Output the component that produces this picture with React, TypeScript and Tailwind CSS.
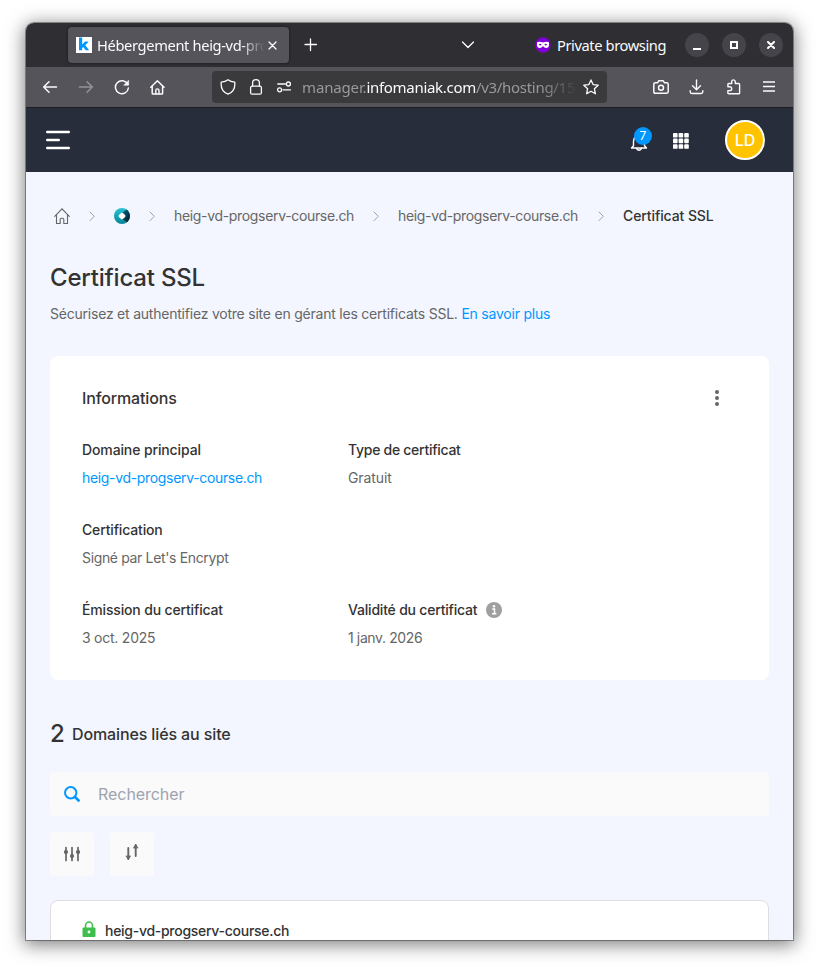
import React from "react";

type IconProps = { children: React.ReactNode; className?: string; size?: number; box?: number };

function Icon({ children, className = "", size = 16, box = 16 }: IconProps) {
  return (
    <svg
      width={size}
      height={size}
      viewBox={`0 0 ${box} ${box}`}
      fill="none"
      stroke="currentColor"
      strokeWidth="1.3"
      strokeLinecap="round"
      strokeLinejoin="round"
      className={`block shrink-0 ${className}`}
    >
      {children}
    </svg>
  );
}

function TabBar() {
  return (
    <div className="flex h-11 items-center bg-[#2f2e33] pr-[10px] pl-[42px]">
      <div className="flex h-9 w-[221px] items-center rounded bg-[#55545a] pl-2 shadow-[0_0_3px_rgba(0,0,0,0.6)]">
        <svg width="16" height="16" viewBox="0 0 16 16" className="block shrink-0">
          <rect width="16" height="16" fill="#fff" />
          <path d="M3 .5h3.200v7L9 4.500h3.700L9.300 8.200l3.800 5.100H9.600L7.300 9.900l-1.100 1.100v2.300H3z" fill="#0098ff" />
        </svg>
        <div className="ml-[5px] w-[168px] overflow-hidden whitespace-nowrap text-[14.67px] leading-9 tracking-[-0.35px] text-[#fbfbfe] [mask-image:linear-gradient(to_right,black_143px,transparent_168px)]">
          Hébergement heig-vd-pro
        </div>
        <Icon size={9} box={9} className="ml-[3px] text-white"><path d="M1 1l7 7M8 1L1 8" /></Icon>
      </div>
      <Icon className="ml-[14px] text-white"><path d="M7.500 2v11.500M2 7.500h11.500" /></Icon>
      <Icon className="ml-[141px] text-white"><path d="M2.500 5L8 10.500 13.500 5" /></Icon>
      <svg width="16" height="16" viewBox="0 0 16 16" className="ml-[59px] block shrink-0">
        <circle cx="8" cy="8" r="7.700" fill="#8000d7" />
        <path d="M2 5.300c2-1.200 4.400-.5 6 .3 1.600-.8 4-1.500 6-.3v2.800c0 3.400-4.200 3.800-6 1-1.800 2.800-6 2.400-6-1z" fill="#fff" />
        <path d="M3.800 7.600c1-1.100 2.300-1 2.800.2-.8.900-2 1-2.800-.2zm8.400 0c-1-1.100-2.300-1-2.800.2.800.9 2 1 2.800-.2z" fill="#8000d7" />
      </svg>
      <div className="ml-[6px] w-[128px] whitespace-nowrap text-[14.67px] leading-5 tracking-[-0.4px] text-[#fbfbfe]">Private browsing</div>
      <div className="flex h-6 w-6 items-center justify-center rounded-full bg-[#45444a]">
        <div className="mt-[7px] h-[2px] w-2 bg-white" />
      </div>
      <div className="ml-[13px] flex h-6 w-6 items-center justify-center rounded-full bg-[#45444a]">
        <div className="h-2 w-2 border-2 border-white" />
      </div>
      <div className="ml-[13px] flex h-6 w-6 items-center justify-center rounded-full bg-[#45444a]">
        <Icon size={8} box={8} className="text-white"><path d="M1 1l6 6M7 1L1 7" strokeWidth="2" /></Icon>
      </div>
    </div>
  );
}

function NavBar() {
  return (
    <div className="flex h-10 items-center bg-[#55545a] pl-4 text-[#fbfbfe]">
      <Icon><path d="M14.500 8H1.700M7 2.700L1.700 8 7 13.300" strokeWidth="1.500" /></Icon>
      <Icon className="ml-5 text-[#949398]"><path d="M1.500 8h12.800M9 2.700L14.300 8 9 13.300" strokeWidth="1.500" /></Icon>
      <Icon className="ml-5">
        <path d="M13.700 5.200A6.500 6.500 0 1 0 14.400 9" strokeWidth="1.500" />
        <path d="M14.600 1.600v4.600H10z" fill="currentColor" strokeWidth=".6" />
      </Icon>
      <Icon className="ml-5">
        <path d="M.8 8.300l6.600-6.500L14 8.300M2.200 7.300v7q0 .8.800.8h8.800q.8 0 .8-.8v-7" strokeWidth="1.500" />
        <path d="M5.800 14.800v-3.300a1.600 1.600 0 0 1 3.200 0v3.300" strokeWidth="1.400" />
      </Icon>
      <div className="ml-[46px] flex h-8 w-[395px] items-center rounded bg-[#3a393b] pl-2">
        <Icon><path d="M8 .8C6 2.400 3.500 3 1.200 3.200c-.5 5.200 1.500 9.800 6.800 12 5.300-2.200 7.300-6.800 6.800-12C12.500 3 10 2.400 8 .8z" strokeWidth="1.300" /></Icon>
        <Icon className="ml-3">
          <rect x="2.600" y="7.200" width="10.800" height="8" rx="1.500" strokeWidth="1.300" />
          <path d="M4.600 7V4.100a3.400 3.400 0 0 1 6.800 0V7" strokeWidth="1.300" />
        </Icon>
        <Icon className="ml-3">
          <path d="M1.800 5h7.500M7 10.800h7.500" />
          <circle cx="12.400" cy="5" r="2" />
          <circle cx="3.600" cy="10.800" r="2" />
        </Icon>
        <div className="ml-[10px] w-[274px] overflow-hidden whitespace-nowrap text-[15px] leading-8 text-[#99989b] [mask-image:linear-gradient(to_right,black_238px,transparent_276px)]">
          <span className="tracking-[-0.15px]">manager.</span><span className="tracking-[-0.3px] text-[#fbfbfe]">infomaniak.com</span><span className="tracking-[-0.3px]">/v3/hosting/15</span>
        </div>
        <Icon className="ml-[7px]"><path d="M8 .9l2.100 4.700 5.100.6-3.800 3.500 1 5.100L8 12.300l-4.400 2.500 1-5.100L.8 6.200l5.100-.6z" /></Icon>
      </div>
      <Icon className="ml-[46px]">
        <path d="M2.200 3.800h2.300l1.200-2h4.600l1.200 2h2.300q1.400 0 1.400 1.400v7.600q0 1.400-1.400 1.400H2.200Q.8 14.200.8 12.800V5.200q0-1.400 1.400-1.400z" strokeWidth="1.500" />
        <circle cx="8" cy="8.700" r="2.500" strokeWidth="1.500" />
      </Icon>
      <Icon className="ml-5"><path d="M7.500 1v9.500M3.500 6.700l4 4 4-4M1.200 11.800v1q0 1.700 1.700 1.700h9.200q1.700 0 1.700-1.700v-1" strokeWidth="1.400" /></Icon>
      <Icon className="ml-[21px]">
        <path d="M2.800 4.500h2.900V2.700a1.800 1.800 0 0 1 3.600 0v1.800h3.400q.9 0 .9.900v8.500q0 .9-.9.900H2.800q-.9 0-.9-.9v-2.300h1.900a1.900 1.900 0 0 0 0-3.800H1.900V5.400q0-.9.900-.9z" strokeWidth="1.400" />
      </Icon>
      <Icon className="ml-[19px]"><path d="M2 3h12M2 7.500h12M2 12h12" strokeLinecap="butt" /></Icon>
    </div>
  );
}

function SiteHeader() {
  return (
    <div className="flex h-[65px] items-center border-t border-[#1d1d22] bg-[#282d3b] pr-7 pl-5 text-white">
      <Icon size={24} box={24}>
        <path d="M1.200 4h21.600M1.200 12h11.600M1.200 20h21.600" strokeWidth="2.400" />
      </Icon>
      <div className="relative ml-[559px] h-6 w-6">
        <Icon size={18} box={18} className="absolute top-[5px] left-[1px]">
          <path d="M3.500 12.700V8.200Q4 3 9 2.500q5 .5 5.500 5.700v4.500l2 2.300h-15z" strokeWidth="1.400" />
          <path d="M6.500 15.500q2.500 3.500 5 0" strokeWidth="1.400" />
        </Icon>
        <div className="absolute -top-[1px] left-[5px] flex h-[18px] w-[18px] items-center justify-center rounded-full bg-[#0098ff] font-['Inter',sans-serif] text-xs">7</div>
      </div>
      <svg width="16" height="16" viewBox="0 0 16 16" fill="white" className="mt-[2px] ml-5 block shrink-0">
        {[0, 5.6, 11.2].map((y) =>
          [0, 5.6, 11.2].map((x) => <rect key={`${x}-${y}`} x={x} y={y} width="4.6" height="4.6" rx="0.9" />)
        )}
      </svg>
      <div className="ml-9 flex h-10 w-10 items-center justify-center rounded-full border-2 border-white bg-[#ffc300] font-['Inter',sans-serif] text-base font-medium">
        LD
      </div>
    </div>
  );
}

function Chevron({ className }: { className: string }) {
  return <Icon size={10} box={10} className={`text-[#a0a0a4] ${className}`}><path d="M3 1l4.300 4.300L3 9.600" strokeWidth="1" /></Icon>;
}

function Breadcrumb() {
  return (
    <div className="flex h-5 items-center text-sm leading-5 tracking-[-0.33px] whitespace-nowrap text-[#666]">
      <Icon className="ml-1"><path d="M.7 8.300L8 .9l7.300 7.400M2.500 7v8.500h3.700v-4.300q0-1 1-1h1.600q1 0 1 1v4.300h3.700V7" strokeWidth="1.100" strokeLinejoin="miter" /></Icon>
      <Chevron className="ml-[17px]" />
      <svg width="16" height="16" viewBox="0 0 16 16" className="ml-[17px] block shrink-0">
        <defs>
          <linearGradient id="discLight" x1="0" y1="0" x2="0" y2="1"><stop stopColor="#26c3d2" /><stop offset="1" stopColor="#078596" /></linearGradient>
          <linearGradient id="discDark" x1="0" y1="0" x2="1" y2="1"><stop stopColor="#0a6b88" /><stop offset="1" stopColor="#001525" /></linearGradient>
        </defs>
        <circle cx="8" cy="8" r="8" fill="url(#discLight)" />
        <path d="M8 5l4.500-3.600A8 8 0 0 1 13 14.200L8 11z" fill="url(#discDark)" />
        <path d="M8 4.500q.5 0 .9.400l2.200 2.200q.9.900 0 1.800l-2.200 2.200q-.9.900-1.800 0L4.900 8.900Q4 8 4.900 7.100l2.200-2.200q.4-.4.900-.4z" fill="#fff" />
      </svg>
      <Chevron className="ml-[17px]" />
      <span className="ml-[17px] w-[180px]">heig-vd-progserv-course.ch</span>
      <Chevron className="ml-[17px]" />
      <span className="ml-[17px] w-[180px]">heig-vd-progserv-course.ch</span>
      <Chevron className="ml-[18px]" />
      <span className="ml-[17px] font-medium tracking-[-0.1px] text-[#333]">Certificat SSL</span>
    </div>
  );
}

type FieldProps = { label: string; labelClass: string; children: React.ReactNode; info?: boolean };

function Field({ label, labelClass, children, info }: FieldProps) {
  return (
    <div className="text-sm leading-5 tracking-[-0.33px] whitespace-nowrap text-[#666]">
      <div className={`flex h-5 items-center font-medium text-[#333] ${labelClass}`}>
        {label}
        {info && (
          <svg width="16" height="16" viewBox="0 0 16 16" className="ml-[9px] block">
            <circle cx="8" cy="8" r="8" fill="#9f9f9f" />
            <path d="M6.200 7h2.300v4.500M6 11.800h4.300" fill="none" stroke="#fff" strokeWidth="1.500" />
            <circle cx="8" cy="4.300" r="1.200" fill="#fff" />
          </svg>
        )}
      </div>
      <div className="mt-2">{children}</div>
    </div>
  );
}

function InfoCard() {
  return (
    <div className="mt-8 h-[324px] rounded-lg bg-white px-8 pt-[30px]">
      <div className="flex h-6 items-center justify-between pr-[9px]">
        <h2 className="text-base leading-6 font-medium tracking-[-0.14px] text-[#333]">Informations</h2>
        <div className="mr-[9px] flex flex-col gap-[2px]">
          <div className="h-1 w-1 rounded-full bg-[#666]" />
          <div className="h-1 w-1 rounded-full bg-[#666]" />
          <div className="h-1 w-1 rounded-full bg-[#666]" />
        </div>
      </div>
      <div className="mt-[30px] grid grid-cols-[266px_1fr] gap-y-8">
        <Field label="Domaine principal" labelClass="tracking-[-0.12px]"><span className="text-[#0098ff]">heig-vd-progserv-course.ch</span></Field>
        <Field label="Type de certificat" labelClass="tracking-[-0.28px]"><span className="tracking-[-0.1px]">Gratuit</span></Field>
        <div className="col-span-2"><Field label="Certification" labelClass="tracking-[-0.16px]"><span className="tracking-[-0.35px]">Signé par Let's Encrypt</span></Field></div>
        <Field label="Émission du certificat" labelClass="tracking-[-0.16px]"><span className="tracking-[-0.24px]">3 oct. 2025</span></Field>
        <Field label="Validité du certificat" labelClass="tracking-[-0.2px]" info><span className="tracking-[-0.38px]">1 janv. 2026</span></Field>
      </div>
    </div>
  );
}

function Domains() {
  return (
    <>
      <div className="mt-[38px] flex h-8 items-start text-[#333]">
        <span className="text-2xl leading-8 font-medium tracking-[-0.8px]">2</span>
        <span className="ml-2 text-base leading-8 font-medium tracking-[-0.12px]">Domaines liés au site</span>
      </div>
      <div className="mt-[22px] flex h-11 items-center rounded bg-[#fafafa] pl-[14px]">
        <Icon className="text-[#0098ff]"><circle cx="6.700" cy="6.700" r="5.700" strokeWidth="2" /><path d="M11 11l3.600 3.500" strokeWidth="2.600" /></Icon>
        <span className="ml-[18px] text-base tracking-[-0.05px] text-[#9fa3b0]">Rechercher</span>
      </div>
      <div className="mt-4 flex gap-4">
        <div className="flex h-11 w-11 items-center justify-center rounded bg-[#fafafa] text-[#666]">
          <Icon>
            <path d="M2 1.500v13M8 1.500v13M14 1.500v13" strokeWidth="1.700" />
            <g fill="currentColor" stroke="none"><circle cx="2" cy="6" r="2.100" /><circle cx="8" cy="10" r="2.100" /><circle cx="14" cy="6" r="2.100" /></g>
          </Icon>
        </div>
        <div className="flex h-11 w-11 items-center justify-center rounded bg-[#fafafa] pb-1 text-[#666]">
          <Icon>
            <path d="M4.300 4v11M11.700 1v11" strokeWidth="1.900" />
            <path d="M2.100 12.300l2.200 3.200 2.200-3.200zM9.500 3.700L11.700.5l2.200 3.200z" fill="currentColor" strokeWidth=".7" />
          </Icon>
        </div>
      </div>
      <div className="mt-6 flex h-16 items-start rounded-t-lg border border-[#dedee2] bg-white pt-5 pl-[30px]">
        <Icon className="text-[#3ebf4d]">
          <path d="M4.500 7V5a3.500 4 0 0 1 7 0v2" strokeWidth="1.600" />
          <rect x="1.500" y="6.500" width="13" height="9.500" rx="1" fill="currentColor" stroke="none" />
          <circle cx="8" cy="11" r="1.400" fill="#fff" stroke="none" />
        </Icon>
        <span className="ml-2 text-sm leading-5 font-medium tracking-[-0.28px] text-[#333]">heig-vd-progserv-course.ch</span>
      </div>
    </>
  );
}

export default function App() {
  return (
    <div className="h-[969px] w-[819px] overflow-hidden bg-white pt-[23px] pl-[26px]">
      <div className="h-[917px] w-[767px] overflow-hidden rounded-t-[8px] bg-[#f3f6ff] font-['Noto_Sans',sans-serif] shadow-[0_0_0_1px_rgba(0,0,0,0.35),0_3px_18px_2px_rgba(0,0,0,0.5)]">
        <TabBar />
        <NavBar />
        <SiteHeader />
        <main className="px-6 pt-[34px] font-['Inter',sans-serif]">
          <Breadcrumb />
          <h1 className="mt-[36px] text-2xl leading-8 font-medium tracking-[-0.2px] text-[#333]">Certificat SSL</h1>
          <p className="mt-[10px] text-sm leading-5 tracking-[-0.22px] text-[#666]">
            Sécurisez et authentifiez votre site en gérant les certificats SSL. <span className="text-[#0098ff]">En savoir plus</span>
          </p>
          <InfoCard />
          <Domains />
        </main>
      </div>
    </div>
  );
}
